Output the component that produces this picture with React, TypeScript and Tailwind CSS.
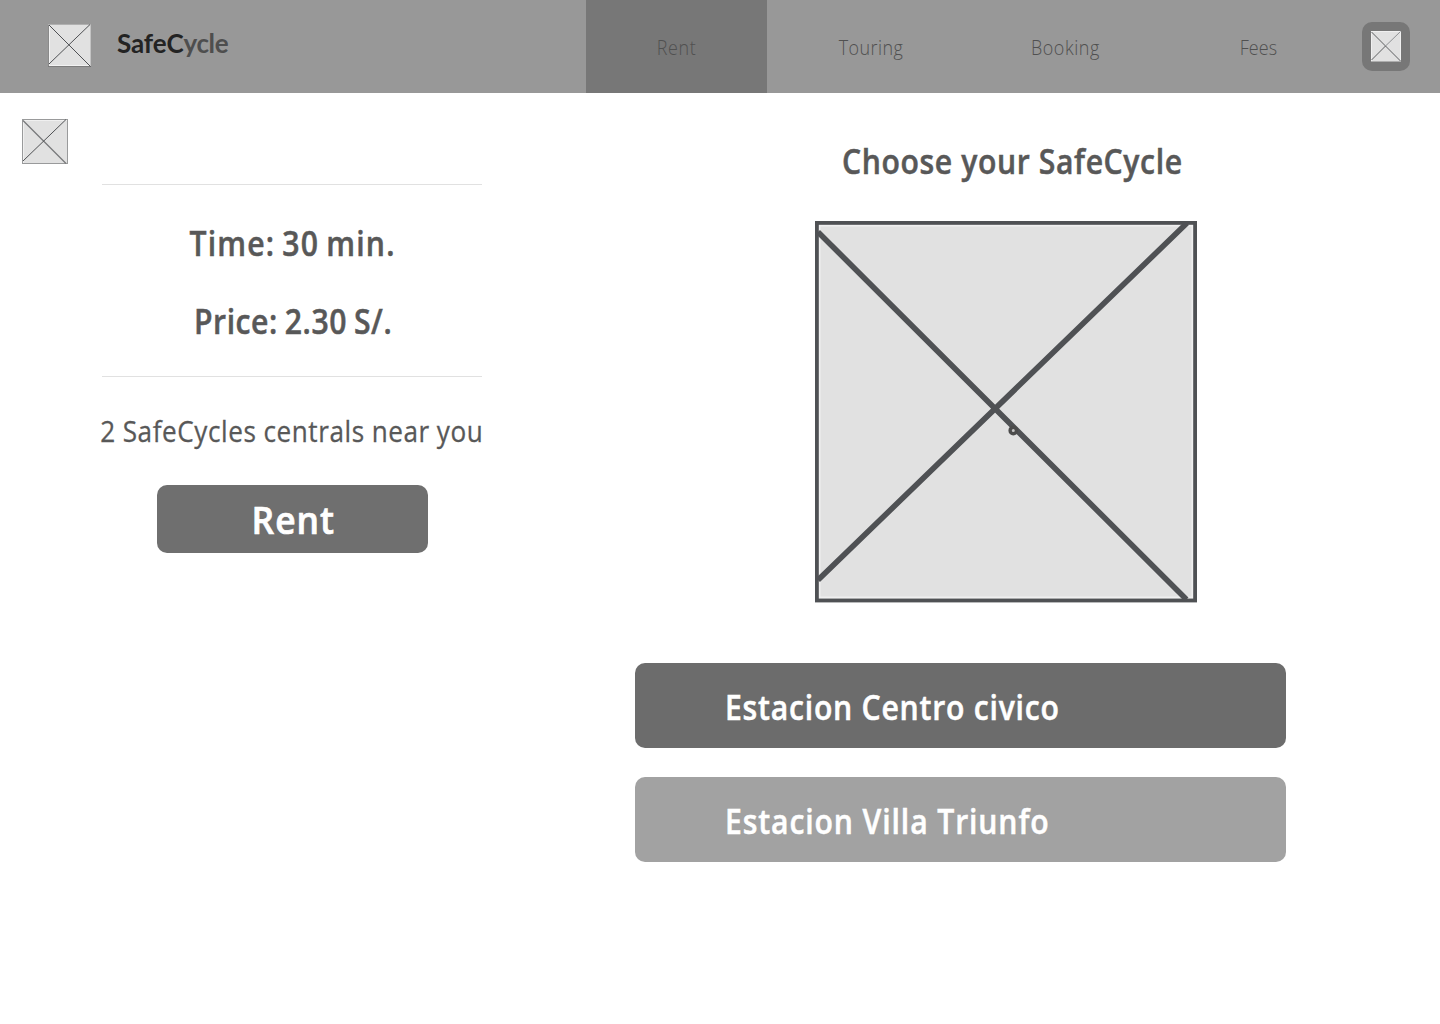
const heading = "block scale-x-[0.9] font-['Open_Sans',sans-serif] font-semibold text-[33.5px] leading-[40px] whitespace-nowrap [-webkit-text-stroke:0.5px_currentColor]";
const navText = "block scale-x-[0.92] font-['Open_Sans',sans-serif] font-light text-[19.5px] whitespace-nowrap text-[#505050]";

function LogoPlaceholder() {
  return (
    <svg className="block h-[43px] w-[43px]" viewBox="0 0 43 43" fill="none">
      <rect width="43" height="43" fill="#e1e1e1" />
      <path d="M0.5 0V43" stroke="#8a8a8a" />
      <path d="M1.5 1V42M1 41.5H42" stroke="#f2f2f2" />
      <path d="M42.5 0V43" stroke="#c4c4c4" />
      <path d="M0 42.5H43" stroke="#7c7c7c" />
      <path d="M0 0.5H43" stroke="#b0b0b0" />
      <path d="M1 1L42.5 42.5M42 0.5L1 40" stroke="#4f5154" />
    </svg>
  );
}

function BackPlaceholder() {
  return (
    <svg className="block h-[45px] w-[46px]" viewBox="0 0 46 45" fill="none">
      <rect x="0.5" y="0.5" width="45" height="44" fill="#e1e1e1" stroke="#999a9b" />
      <path d="M1.5 1V44M1 1.5H45" stroke="#f0f0f0" />
      <path d="M1 1.5L44 44.5" stroke="#77787a" strokeWidth="1.2" />
      <path d="M44 0.5L1 42" stroke="#4f5154" />
    </svg>
  );
}

function ProfilePlaceholder() {
  return (
    <svg className="block h-[31px] w-[30px]" viewBox="0 0 30 31" fill="none">
      <rect width="30" height="31" fill="#e1e1e1" />
      <path d="M0 0.5H30M29.5 0V31M0.5 1V30" stroke="#f0f0f0" />
      <path d="M0 30.5H30" stroke="#adadad" />
      <path d="M0.5 1L29.5 30M14.5 15L0.5 29" stroke="#4f5154" strokeWidth="0.9" />
      <path d="M29.5 0.5L14.5 15" stroke="#85878a" strokeWidth="0.9" />
    </svg>
  );
}

function CyclePicture() {
  return (
    <svg className="block h-[382px] w-[382px]" viewBox="0 0 382 382" fill="none">
      <rect x="2" y="2" width="378" height="378" fill="#e1e1e1" />
      <rect x="4.5" y="4.5" width="373" height="372" stroke="#efefef" strokeWidth="2" />
      <path d="M3 11L371.5 378.5M372 2L3 359" stroke="#4f5154" strokeWidth="5.6" />
      <rect x="1.9" y="1.9" width="378.2" height="377.6" stroke="#4f5154" strokeWidth="3.8" />
      <circle cx="198.3" cy="209.5" r="3.2" fill="#c4c4c4" stroke="#4b4b4b" strokeWidth="3.4" />
    </svg>
  );
}

export default function App() {
  return (
    <div className="flex h-[1024px] w-[1440px] flex-col overflow-hidden bg-white text-[#585858]">
      <header className="flex h-[93px] shrink-0 bg-[#989898]">
        <div className="flex w-[586px] pt-6 pl-12">
          <LogoPlaceholder />
          <div className="ml-[26px] font-['Lato',sans-serif] text-[26px] leading-[38px] font-bold whitespace-nowrap text-[#232323]">
            <span className="tracking-[-0.1px]">SafeC</span>
            <span className="tracking-[-0.4px] text-[#4e4e4e]">ycle</span>
          </div>
        </div>
        <nav className="flex">
          <a className="flex w-[181px] items-center justify-center bg-[#777777] pt-0.5 pl-px">
            <span className={`${navText} tracking-[0.7px]`}>Rent</span>
          </a>
          <a className="flex w-[208px] items-center justify-center pt-0.5">
            <span className={`${navText} tracking-[0.45px]`}>Touring</span>
          </a>
          <a className="flex w-[181px] items-center justify-center pt-0.5">
            <span className={`${navText} tracking-[0.6px]`}>Booking</span>
          </a>
          <a className="flex w-[206px] items-center justify-center pt-0.5 pr-px">
            <span className={`${navText} tracking-[0.15px]`}>Fees</span>
          </a>
        </nav>
        <button className="mt-[22px] flex h-[49px] w-12 items-center justify-center rounded-[10px] bg-[#777777]">
          <ProfilePlaceholder />
        </button>
      </header>

      <main className="flex grow">
        <div className="w-[102px] pt-[26px] pl-[22px]">
          <BackPlaceholder />
        </div>
        <section className="flex w-[380px] flex-col items-center pt-[91px]">
          <div className="flex h-[193px] w-full flex-col items-center gap-[38px] border-y border-[#e1e1e1] pt-[38px] pl-0.5">
            <p className={`${heading} tracking-[1.3px] [word-spacing:-2px]`}>Time: 30 min.</p>
            <p className={`${heading} tracking-[0.6px] [word-spacing:-1.5px]`}>Price: 2.30 S/.</p>
          </div>
          <p className="mt-[34px] scale-x-[0.9] font-['Open_Sans',sans-serif] text-[29px] leading-[40px] tracking-[0.65px] [word-spacing:-0.5px] whitespace-nowrap [-webkit-text-stroke:0.3px_currentColor]">
            2 SafeCycles centrals near you
          </p>
          <button className="mt-[34px] flex h-[68px] w-[271px] items-center justify-center rounded-[10px] bg-[#6f6f6f] pt-0.5 pl-0.5 text-white">
            <span className="block scale-x-[0.92] font-['Open_Sans',sans-serif] text-[38.5px] font-semibold tracking-[1px] [-webkit-text-stroke:0.7px_currentColor]">Rent</span>
          </button>
        </section>

        <section className="ml-[153px] flex w-[651px] flex-col pt-12">
          <h1 className={`${heading} ml-[207px] origin-left tracking-[0.68px]`}>Choose your SafeCycle</h1>
          <div className="mt-10 ml-[180px]">
            <CyclePicture />
          </div>
          <button className="mt-[60px] flex h-[85px] items-center rounded-[10px] bg-[#6c6c6c] pt-0.5 pl-[90px] text-white">
            <span className={`${heading} origin-left tracking-[0.85px]`}>Estacion Centro civico</span>
          </button>
          <button className="mt-[29px] flex h-[85px] items-center rounded-[10px] bg-[#a2a2a2] pt-0.5 pl-[90px] text-white">
            <span className={`${heading} origin-left tracking-[0.98px]`}>Estacion Villa Triunfo</span>
          </button>
        </section>
      </main>
    </div>
  );
}
